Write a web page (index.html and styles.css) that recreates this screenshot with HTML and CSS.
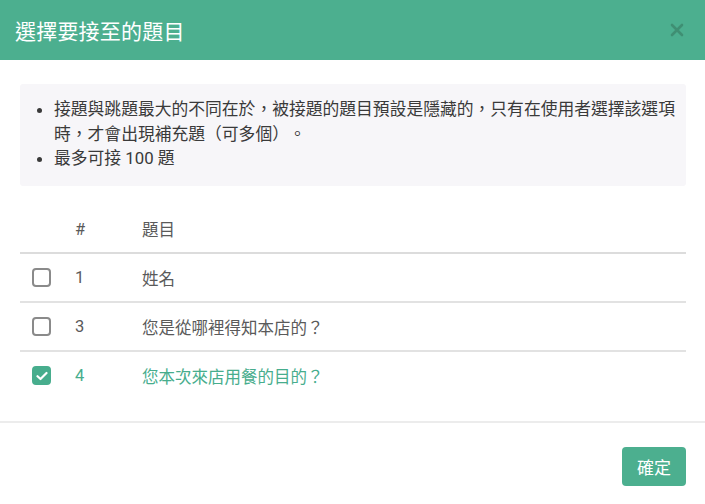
FILE: index.html
```html
<!DOCTYPE html>
<html lang="zh-Hant">
<head>
<meta charset="utf-8">
<link rel="stylesheet" href="styles.css">
</head>
<body>
<div class="modal">
  <header class="modal-header">
    <h1 class="modal-title">選擇要接至的題目</h1>
    <button class="close" aria-label="close">
      <svg width="14" height="14" viewBox="0 0 14 14"><path d="M2 2L12 12M12 2L2 12" stroke="#3f8f73" stroke-width="2.6" stroke-linecap="round"/></svg>
    </button>
  </header>
  <div class="modal-body">
    <div class="info">
      <ul class="info-list">
        <li>接題與跳題最大的不同在於，被接題的題目預設是隱藏的，只有在使用者選擇該選項時，才會出現補充題（可多個）。</li>
        <li>最多可接 100 題</li>
      </ul>
    </div>
    <table class="qtable">
      <thead>
        <tr><th class="c-check"></th><th class="c-num">#</th><th class="c-title">題目</th></tr>
      </thead>
      <tbody>
        <tr><td class="c-check"><span class="box"></span></td><td class="c-num">1</td><td class="c-title">姓名</td></tr>
        <tr><td class="c-check"><span class="box"></span></td><td class="c-num">3</td><td class="c-title">您是從哪裡得知本店的？</td></tr>
        <tr class="selected"><td class="c-check"><span class="box checked"><svg width="12" height="10" viewBox="0 0 12 10"><path d="M1.5 5.2L4.5 8L10.5 2" fill="none" stroke="#fff" stroke-width="2.2" stroke-linecap="round" stroke-linejoin="round"/></svg></span></td><td class="c-num">4</td><td class="c-title">您本次來店用餐的目的？</td></tr>
      </tbody>
    </table>
  </div>
  <footer class="modal-footer">
    <button class="btn-ok">確定</button>
  </footer>
</div>
</body>
</html>
```

FILE: styles.css
```css
html, body {
  margin: 0;
  padding: 0;
  background: #fff;
}
body {
  font-family: Roboto, "Noto Sans CJK TC", sans-serif;
  color: #333;
  text-spacing-trim: space-all;
}
.modal {
  width: 705px;
  height: 504px;
  display: flex;
  flex-direction: column;
}
.modal-header {
  height: 60px;
  background: #4caf8f;
  display: flex;
  align-items: center;
  justify-content: space-between;
  padding: 0 21px 0 15px;
  box-sizing: border-box;
}
.modal-title {
  margin: 0;
  font-size: 21px;
  font-weight: 400;
  color: #fff;
  letter-spacing: 0.2px;
}
.close {
  border: 0;
  background: none;
  padding: 0;
  width: 14px;
  height: 14px;
  display: flex;
  cursor: pointer;
}
.modal-body {
  padding: 24px 19px 0 20px;
}
.info {
  background: #f7f6f9;
  border-radius: 3px;
  padding: 13px 0 15px 0;
  height: 102px;
  box-sizing: border-box;
}
.info-list {
  margin: 0;
  padding-left: 34px;
  font-size: 16.8px;
  line-height: 24.5px;
  color: #3a3a3a;
}
.qtable {
  width: 100%;
  margin-top: 20px;
  border-collapse: collapse;
  font-size: 16.5px;
  color: #5a5a5a;
}
.qtable th {
  font-weight: 400;
  text-align: left;
  height: 46px;
  border-bottom: 2px solid #dcdcdc;
  padding: 0;
}
.qtable td {
  height: 47px;
  padding: 0;
  border-bottom: 2px solid #e2e2e2;
}
.qtable tbody tr:last-child td {
  border-bottom: 0;
}
.c-check {
  width: 55px;
  padding-left: 12px !important;
  box-sizing: border-box;
}
.c-num {
  width: 67px;
}
.box {
  display: flex;
  align-items: center;
  justify-content: center;
  width: 19px;
  height: 19px;
  border: 2px solid #8a8a8a;
  border-radius: 4px;
  box-sizing: border-box;
}
.box.checked {
  background: #47ad8d;
  border-color: #47ad8d;
}
.selected td {
  color: #47ad8d;
}
.modal-footer {
  margin-top: 22px;
  border-top: 2px solid #ececec;
  display: flex;
  justify-content: flex-end;
  padding: 24px 19px 0 0;
}
.btn-ok {
  width: 64px;
  height: 39px;
  border: 0;
  border-radius: 4px;
  background: #4caf8f;
  color: #fff;
  font-family: Roboto, "Noto Sans CJK TC", sans-serif;
  font-size: 17px;
  padding: 0;
}
```
